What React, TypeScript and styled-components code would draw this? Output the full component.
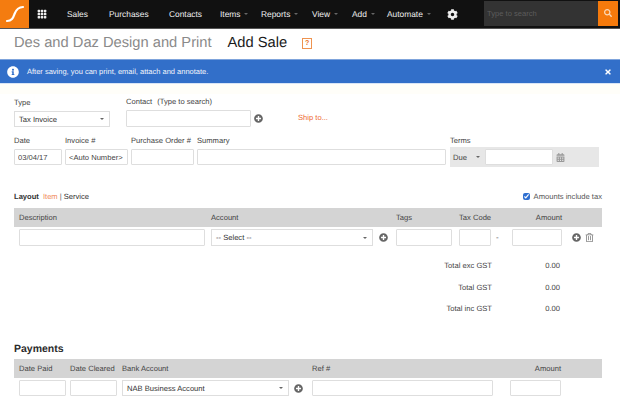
import styled, { createGlobalStyle } from "styled-components";
import { BsGrid3X3GapFill } from "react-icons/bs";
import { FaCalendarAlt, FaCog, FaInfoCircle, FaPlusCircle, FaRegTrashAlt, FaSearch, FaTimes } from "react-icons/fa";

const GlobalStyle = createGlobalStyle`
  html, body {
    margin: 0;
    padding: 0;
    background: #fff;
    overflow: hidden;
  }
  body {
    font-family: "Liberation Sans", Arial, sans-serif;
    color: #333;
    text-rendering: geometricPrecision;
  }
  * {
    box-sizing: border-box;
  }
`;

const Page = styled.div`
  width: 620px;
  height: 417px;
  overflow: hidden;
`;

const Nav = styled.nav`
  height: 29px;
  display: flex;
  align-items: center;
  background: #111;
  border-bottom: 1px solid #555;
`;
const Logo = styled.div`
  width: 29px;
  height: 28px;
  background: #f47c10;
  display: flex;
  align-items: center;
  justify-content: center;
`;
const GridButton = styled.div`
  width: 26px;
  margin-right: 12px;
  display: flex;
  justify-content: center;
  color: #eee;
  font-size: 10px;
`;
const NavItem = styled.span<{ $width: number }>`
  width: ${(props) => props.$width}px;
  flex: none;
  color: #efefef;
  font-size: 8.4px;
  display: flex;
  align-items: center;
  gap: 4px;
`;
const Caret = styled.i`
  width: 0;
  height: 0;
  border-left: 2px solid transparent;
  border-right: 2px solid transparent;
  border-top: 2.5px solid #666;
`;
const Gear = styled.div`
  width: 37px;
  color: #eee;
  font-size: 11px;
  display: flex;
`;
const Search = styled.div`
  width: 134px;
  height: 25px;
  display: flex;
  margin-top: -2px;
`;
const SearchInput = styled.input`
  flex: 1;
  min-width: 0;
  background: #333;
  border: 0;
  padding: 0 3px;
  font: 7.6px "Liberation Sans", Arial, sans-serif;
  &::placeholder {
    color: #5c5c5c;
  }
`;
const SearchButton = styled.div`
  width: 20px;
  background: #f57a0c;
  color: #fbd9b8;
  font-size: 8px;
  display: flex;
  align-items: center;
  justify-content: center;
`;

const TitleRow = styled.div`
  height: 30px;
  padding: 0 0 2px 14px;
  display: flex;
  align-items: center;
`;
const Company = styled.h1`
  margin: 0 16px 0 0;
  font-size: 14.7px;
  font-weight: 400;
  color: #8a8a8a;
`;
const PageName = styled.h2`
  margin: 0 15px 0 0;
  font-size: 14.7px;
  font-weight: 400;
  color: #1a1a1a;
`;
const HelpBadge = styled.span`
  width: 10px;
  height: 11px;
  border: 1px solid #ee9350;
  color: #e8742a;
  font-size: 7px;
  font-weight: 700;
  display: flex;
  align-items: center;
  justify-content: center;
`;

const Banner = styled.div`
  height: 25px;
  padding: 0 8px 0 7px;
  display: flex;
  align-items: center;
  background: #326fc9;
  border-top: 1px solid #7fa4dc;
  border-bottom: 1px solid #d8e5f6;
  color: #fff;
`;
const BannerText = styled.span`
  flex: 1;
  margin-left: 8px;
  font-size: 7.5px;
  color: #f2f5fb;
`;
const Notice = styled.div`
  height: 10px;
  background: #fffef9;
`;

const Form = styled.div`
  padding: 0 18px 0 14px;
`;
const FieldRow = styled.div<{ $height: number; $columns: string }>`
  display: grid;
  grid-template-columns: ${(props) => props.$columns};
  height: ${(props) => props.$height}px;
  align-items: end;
`;
const Field = styled.div<{ $gap?: number }>`
  display: flex;
  flex-direction: column;
  gap: ${(props) => props.$gap ?? 3}px;
`;
const Label = styled.label`
  font-size: 7.6px;
  line-height: 10px;
  color: #444;
`;
const Hint = styled.span`
  margin-left: 5px;
`;
const Inline = styled.div<{ $gap?: number }>`
  display: flex;
  align-items: center;
  gap: ${(props) => props.$gap ?? 0}px;
`;
const TextBox = styled.input<{ $width?: number; $height?: number }>`
  width: ${(props) => (props.$width ? `${props.$width}px` : "100%")};
  height: ${(props) => props.$height ?? 17}px;
  flex: none;
  border: 1px solid #dedede;
  border-radius: 1px;
  background: #fff;
  padding: 0 3px;
  font: 7.6px "Liberation Sans", Arial, sans-serif;
  color: #444;
  outline: none;
`;
const SelectBox = styled.div<{ $width?: number; $height?: number }>`
  width: ${(props) => (props.$width ? `${props.$width}px` : "100%")};
  height: ${(props) => props.$height ?? 17}px;
  flex: none;
  border: 1px solid #dedede;
  background: #fff;
  padding: 0 5px 0 4px;
  font-size: 7.6px;
  color: #333;
  display: flex;
  align-items: center;
  justify-content: space-between;
`;
const AddIcon = styled(FaPlusCircle)`
  color: #666;
  font-size: 9px;
  flex: none;
`;
const ShipLink = styled.a`
  color: #ee6b35;
  font-size: 7.6px;
  align-self: center;
  margin-top: 13px;
`;
const TermsBox = styled.div`
  width: 149px;
  height: 20px;
  margin-bottom: -2px;
  background: #e7e7e7;
  display: flex;
  align-items: center;
  font-size: 7.6px;
  color: #444;
  padding-left: 3px;
`;
const DueSelect = styled.span`
  width: 32px;
  display: flex;
  align-items: center;
  justify-content: space-between;
  padding-right: 5px;
`;
const CalendarIcon = styled(FaCalendarAlt)`
  color: #999;
  font-size: 9px;
  margin-left: 3px;
`;

const LayoutBar = styled.div`
  height: 23px;
  margin-top: 20px;
  display: flex;
  align-items: center;
  font-size: 7.6px;
`;
const LayoutTitle = styled.strong`
  color: #333;
  margin-right: 4px;
`;
const ItemLink = styled.span`
  color: #f08a5d;
`;
const Divider = styled.span`
  color: #666;
  margin: 0 2px;
`;
const TaxOption = styled.label`
  margin-left: auto;
  display: flex;
  align-items: center;
  gap: 4px;
  color: #555;
`;
const Check = styled.input`
  width: 7px;
  height: 7px;
  margin: 0;
  accent-color: #2f6fd0;
`;

const HeaderBar = styled.div<{ $columns: string }>`
  height: 19px;
  padding-left: 5px;
  background: #d4d4d4;
  display: grid;
  grid-template-columns: ${(props) => props.$columns};
  align-items: center;
  font-size: 7.6px;
  color: #444;
`;
const RightCell = styled.span`
  text-align: right;
`;
const LineRow = styled.div<{ $columns: string }>`
  padding: 2px 0 0 5px;
  display: grid;
  grid-template-columns: ${(props) => props.$columns};
  align-items: center;
`;
const TaxCell = styled.div`
  display: flex;
  align-items: center;
  gap: 5px;
  color: #555;
  font-size: 8px;
`;
const Actions = styled.div`
  padding-left: 10px;
  display: flex;
  align-items: center;
  gap: 4px;
`;
const TrashIcon = styled(FaRegTrashAlt)`
  color: #888;
  font-size: 9px;
`;
const Totals = styled.div`
  padding-top: 9px;
  height: 94px;
`;
const TotalRow = styled.div`
  height: 21.5px;
  display: grid;
  grid-template-columns: 478px 68px;
  align-items: center;
  font-size: 7.6px;
  color: #444;
`;
const PaymentsTitle = styled.h3`
  margin: 0;
  height: 19px;
  font-size: 10.5px;
  line-height: 18px;
  color: #2b2b2b;
`;

const lineColumns = "192px 185px 63px 53px 50px 1fr";
const paymentColumns = "51px 52px 190px 198px 51px";

const navItems = [
  { label: "Sales", width: 42 },
  { label: "Purchases", width: 60 },
  { label: "Contacts", width: 51 },
  { label: "Items", width: 41, caret: true },
  { label: "Reports", width: 51, caret: true },
  { label: "View", width: 40, caret: true },
  { label: "Add", width: 35, caret: true },
  { label: "Automate", width: 60, caret: true },
];

const totals = ["Total exc GST", "Total GST", "Total inc GST"];

function App() {
  return (
    <Page>
      <GlobalStyle />
      <Nav>
        <Logo>
          <svg width="20" height="18" viewBox="0 0 20 18">
            <path d="M2 16c5 0 6-3 7.5-7S13 2 18 2" fill="none" stroke="#fff" strokeWidth="2.2" strokeLinecap="round" />
          </svg>
        </Logo>
        <GridButton>
          <BsGrid3X3GapFill />
        </GridButton>
        {navItems.map((item) => (
          <NavItem key={item.label} $width={item.width}>
            {item.label}
            {item.caret && <Caret />}
          </NavItem>
        ))}
        <Gear>
          <FaCog />
        </Gear>
        <Search>
          <SearchInput placeholder="Type to search" />
          <SearchButton>
            <FaSearch />
          </SearchButton>
        </Search>
      </Nav>

      <TitleRow>
        <Company>Des and Daz Design and Print</Company>
        <PageName>Add Sale</PageName>
        <HelpBadge>?</HelpBadge>
      </TitleRow>

      <Banner>
        <FaInfoCircle size={12} />
        <BannerText>After saving, you can print, email, attach and annotate.</BannerText>
        <FaTimes size={8} />
      </Banner>
      <Notice />

      <Form>
        <FieldRow $height={33} $columns="112px 172px 1fr">
          <Field>
            <Label>Type</Label>
            <SelectBox $width={96} $height={16}>
              Tax Invoice
              <Caret />
            </SelectBox>
          </Field>
          <Field>
            <Label>
              Contact<Hint>(Type to search)</Hint>
            </Label>
            <Inline $gap={3}>
              <TextBox $width={125} />
              <AddIcon />
            </Inline>
          </Field>
          <ShipLink>Ship to...</ShipLink>
        </FieldRow>

        <FieldRow $height={38} $columns="51px 66px 66px 253px 1fr">
          <Field>
            <Label>Date</Label>
            <TextBox $width={48} $height={16} value="03/04/17" readOnly />
          </Field>
          <Field>
            <Label>Invoice #</Label>
            <TextBox $width={63} $height={16} value="<Auto Number>" readOnly />
          </Field>
          <Field>
            <Label>Purchase Order #</Label>
            <TextBox $width={63} $height={16} />
          </Field>
          <Field>
            <Label>Summary</Label>
            <TextBox $width={249} $height={16} />
          </Field>
          <Field $gap={1}>
            <Label>Terms</Label>
            <TermsBox>
              <DueSelect>
                Due
                <Caret />
              </DueSelect>
              <TextBox $width={68} $height={16} />
              <CalendarIcon />
            </TermsBox>
          </Field>
        </FieldRow>

        <LayoutBar>
          <LayoutTitle>Layout</LayoutTitle>
          <ItemLink>Item</ItemLink>
          <Divider>|</Divider>
          Service
          <TaxOption>
            <Check type="checkbox" checked readOnly />
            Amounts include tax
          </TaxOption>
        </LayoutBar>

        <HeaderBar $columns={lineColumns}>
          <span>Description</span>
          <span>Account</span>
          <span>Tags</span>
          <span>Tax Code</span>
          <RightCell>Amount</RightCell>
        </HeaderBar>
        <LineRow $columns={lineColumns}>
          <TextBox $width={186} />
          <Inline $gap={6}>
            <SelectBox $width={162}>
              -- Select --
              <Caret />
            </SelectBox>
            <AddIcon />
          </Inline>
          <TextBox $width={56} />
          <TaxCell>
            <TextBox $width={32} />-
          </TaxCell>
          <TextBox $width={50} />
          <Actions>
            <AddIcon />
            <TrashIcon />
          </Actions>
        </LineRow>

        <Totals>
          {totals.map((label) => (
            <TotalRow key={label}>
              <RightCell>{label}</RightCell>
              <RightCell>0.00</RightCell>
            </TotalRow>
          ))}
        </Totals>

        <PaymentsTitle>Payments</PaymentsTitle>
        <HeaderBar $columns={paymentColumns}>
          <span>Date Paid</span>
          <span>Date Cleared</span>
          <span>Bank Account</span>
          <span>Ref #</span>
          <RightCell>Amount</RightCell>
        </HeaderBar>
        <LineRow $columns={paymentColumns}>
          <TextBox $width={47} $height={16} />
          <TextBox $width={47} $height={16} />
          <Inline $gap={5}>
            <SelectBox $width={167} $height={16}>
              NAB Business Account
              <Caret />
            </SelectBox>
            <AddIcon />
          </Inline>
          <TextBox $width={181} $height={16} />
          <TextBox $width={51} $height={16} />
        </LineRow>
      </Form>
    </Page>
  );
}

export default App;
